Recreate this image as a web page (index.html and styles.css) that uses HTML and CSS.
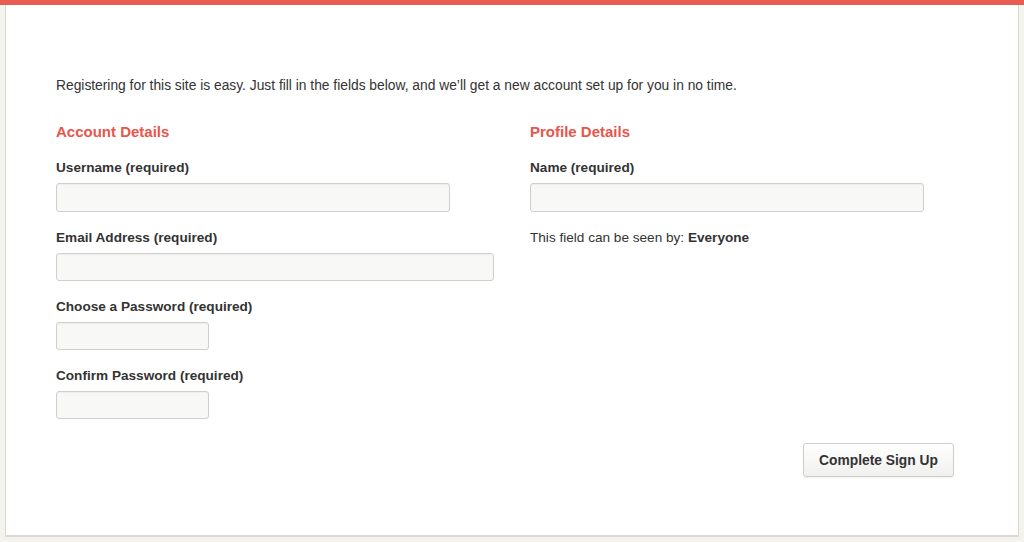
FILE: index.html
```html
<!DOCTYPE html>
<html>
<head>
<meta charset="utf-8">
<link rel="stylesheet" href="styles.css">
</head>
<body>
<div class="topbar"></div>
<div class="page">
  <main class="card">
    <p class="intro">Registering for this site is easy. Just fill in the fields below, and we’ll get a new account set up for you in no time.</p>
    <form class="form">
      <div class="columns">
        <section class="col col-account">
          <h4 class="section-title">Account Details</h4>
          <div class="field">
            <label class="label">Username (required)</label>
            <input class="input input-wide" type="text">
          </div>
          <div class="field">
            <label class="label">Email Address (required)</label>
            <input class="input input-email" type="text">
          </div>
          <div class="field">
            <label class="label">Choose a Password (required)</label>
            <input class="input input-short" type="password">
          </div>
          <div class="field">
            <label class="label">Confirm Password (required)</label>
            <input class="input input-short" type="password">
          </div>
        </section>
        <section class="col col-profile">
          <h4 class="section-title">Profile Details</h4>
          <div class="field">
            <label class="label">Name (required)</label>
            <input class="input input-wide" type="text">
          </div>
          <p class="visibility">This field can be seen by: <strong>Everyone</strong></p>
        </section>
      </div>
      <div class="actions">
        <button class="submit" type="button">Complete Sign Up</button>
      </div>
    </form>
  </main>
</div>
</body>
</html>
```
FILE: styles.css
```css
html, body {
  margin: 0;
  padding: 0;
}
body {
  background: #f4f3ee;
  font-family: "Liberation Sans", Arial, Helvetica, sans-serif;
  color: #333;
  font-size: 13.6px;
  height: 542px;
  overflow: hidden;
}
.topbar {
  height: 5px;
  background: #ea5b52;
}
.page {
  padding: 0 5px 0 5px;
}
.card {
  background: #fff;
  border-left: 1px solid #d9d8d3;
  border-right: 1px solid #d9d8d3;
  border-bottom: 2px solid #d9d8d3;
  padding: 71px 64px 0 50px;
  width: 1014px;
  box-sizing: border-box;
  height: 532px;
}
.intro {
  margin: 0 0 26px;
  font-size: 13.8px;
  line-height: 20px;
}
.columns {
  display: grid;
  grid-template-columns: 444px 1fr;
  column-gap: 30px;
}
.section-title {
  margin: 0 0 16px;
  color: #e8564c;
  font-size: 15px;
  font-weight: bold;
  line-height: 20px;
}
.field {
  display: flex;
  flex-direction: column;
  align-items: flex-start;
  margin-bottom: 16px;
}
.label {
  font-weight: bold;
  line-height: 20px;
  margin-bottom: 5px;
}
.input {
  box-sizing: border-box;
  height: 29px;
  border: 1px solid #cfcfcc;
  border-radius: 3px;
  background: #f8f8f7;
  box-shadow: inset 0 1px 1px rgba(0,0,0,0.04);
  padding: 0 6px;
  margin: 0;
  font: inherit;
}
.input-wide { width: 394px; }
.input-email { width: 438px; height: 28px; }
.input-short { width: 153px; height: 28px; }
.visibility {
  margin: 0;
  line-height: 20px;
}
.visibility strong { font-weight: bold; }
.actions {
  display: flex;
  justify-content: flex-end;
  margin-top: 8px;
}
.submit {
  box-sizing: border-box;
  width: 151px;
  height: 34px;
  border: 1px solid #cdcdcb;
  border-radius: 3px;
  background: linear-gradient(#ffffff, #f0f0ee);
  box-shadow: 0 1px 1px rgba(0,0,0,0.06);
  font: bold 13.8px "Liberation Sans", Arial, sans-serif;
  color: #333;
  padding: 0;
  cursor: pointer;
}
```
